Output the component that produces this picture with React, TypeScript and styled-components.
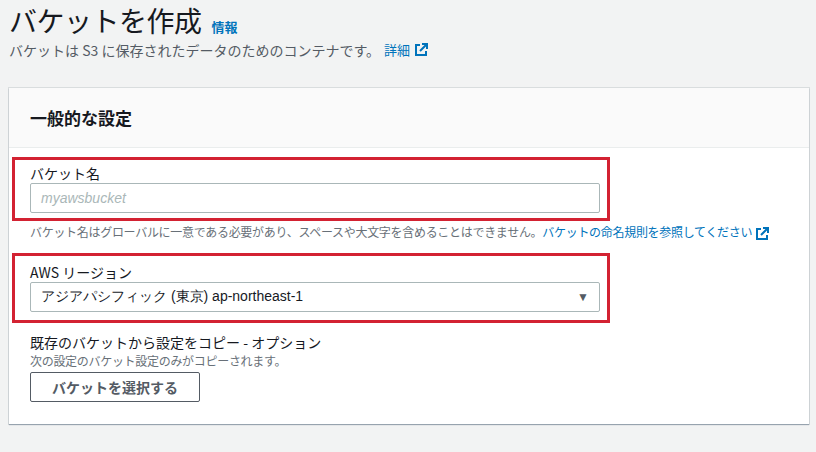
import React from 'react';
import styled, { createGlobalStyle } from 'styled-components';

const Global = createGlobalStyle`
  body {
    margin: 0;
    background: #f2f3f3;
    font-family: "Noto Sans CJK JP", "Noto Sans", sans-serif;
    color: #16191f;
  }
`;

const Page = styled.div`
  padding: 1px 8px 10px 9px;
`;

const TitleRow = styled.div`
  display: flex;
  align-items: baseline;
  gap: 10px;
  height: 38px;
`;

const Title = styled.h1`
  margin: 0;
  font-size: 28px;
  font-weight: 400;
  line-height: 38px;
  letter-spacing: -0.5px;
`;

const Link = styled.a<{ $size?: number }>`
  color: #0073bb;
  font-size: ${(p) => p.$size ?? 13}px;
  font-weight: ${(p) => (p.$size ? 400 : 700)};
  text-decoration: none;
`;

const Subtitle = styled.p`
  margin: 0 0 27px;
  font-size: 14px;
  line-height: 22px;
  color: #545b64;
  display: flex;
  align-items: center;
  gap: 4px;
`;

const Card = styled.section`
  background: #fff;
  box-shadow: 0 1px 1px rgba(0, 31, 63, 0.3), 0 0 0 1px rgba(0, 28, 36, 0.1);
  width: 800px;
`;

const CardHeader = styled.div`
  background: #fafafa;
  border-bottom: 1px solid #eaeded;
  height: 59px;
  padding: 0 21px;
  display: flex;
  align-items: center;
  font-size: 17px;
  font-weight: 700;
`;

const CardBody = styled.div`
  padding: 9px 21px 22px;
`;

const Field = styled.div<{ $pad: number }>`
  border: 3px solid #d32232;
  margin: 0 0 0 -18px;
  padding: ${(p) => p.$pad}px 7px ${(p) => p.$pad + 2}px 15px;
  width: 570px;
`;

const Label = styled.div`
  font-size: 14px;
  line-height: 20px;
`;

const Input = styled.div`
  height: 28px;
  border: 1px solid #aab7b8;
  border-radius: 2px;
  display: flex;
  align-items: center;
  padding: 0 10px;
  font-size: 14px;
  font-family: "Liberation Sans", sans-serif;
`;

const Placeholder = styled.span`
  color: #aab7b8;
  font-style: italic;
`;

const Caret = styled.span`
  margin-left: auto;
  font-size: 12px;
  color: #545b64;
`;

const Hint = styled.p`
  margin: 2px 0 12px;
  font-size: 12px;
  line-height: 17px;
  letter-spacing: -0.3px;
  color: #687078;
  width: 740px;
`;

const Section = styled.div`
  margin-top: 9px;
`;

const SubHint = styled(Hint)`
  margin: 0;
`;

const Button = styled.button`
  margin-top: 3px;
  height: 30px;
  width: 170px;
  background: #fff;
  border: 1px solid #545b64;
  border-radius: 2px;
  font-family: inherit;
  font-size: 14px;
  font-weight: 700;
  color: #545b64;
`;

const Ext = () => (
  <svg width="14" height="14" viewBox="0 0 14 14" style={{ verticalAlign: 'middle' }}>
    <path d="M6 2H2v10h10V8" fill="none" stroke="#0073bb" strokeWidth="2" />
    <path d="M8 1h5v5M13 1L6 8" fill="none" stroke="#0073bb" strokeWidth="2" />
  </svg>
);

export default function App() {
  return (
    <Page>
      <Global />
      <TitleRow>
        <Title>バケットを作成</Title>
        <Link>情報</Link>
      </TitleRow>
      <Subtitle>
        バケットは S3 に保存されたデータのためのコンテナです。<Link $size={13}>詳細</Link> <Ext />
      </Subtitle>
      <Card>
        <CardHeader>一般的な設定</CardHeader>
        <CardBody>
          <Field $pad={3}>
            <Label>バケット名</Label>
            <Input>
              <Placeholder>myawsbucket</Placeholder>
            </Input>
          </Field>
          <Hint>
            バケット名はグローバルに一意である必要があり、スペースや大文字を含めることはできません。
            <Link $size={12}>バケットの命名規則を参照してください</Link> <Ext />
          </Hint>
          <Field $pad={6}>
            <Label>AWS リージョン</Label>
            <Input>
              アジアパシフィック (東京) ap-northeast-1
              <Caret>▼</Caret>
            </Input>
          </Field>
          <Section>
            <Label>既存のバケットから設定をコピー - オプション</Label>
            <SubHint>次の設定のバケット設定のみがコピーされます。</SubHint>
            <Button>バケットを選択する</Button>
          </Section>
        </CardBody>
      </Card>
    </Page>
  );
}
